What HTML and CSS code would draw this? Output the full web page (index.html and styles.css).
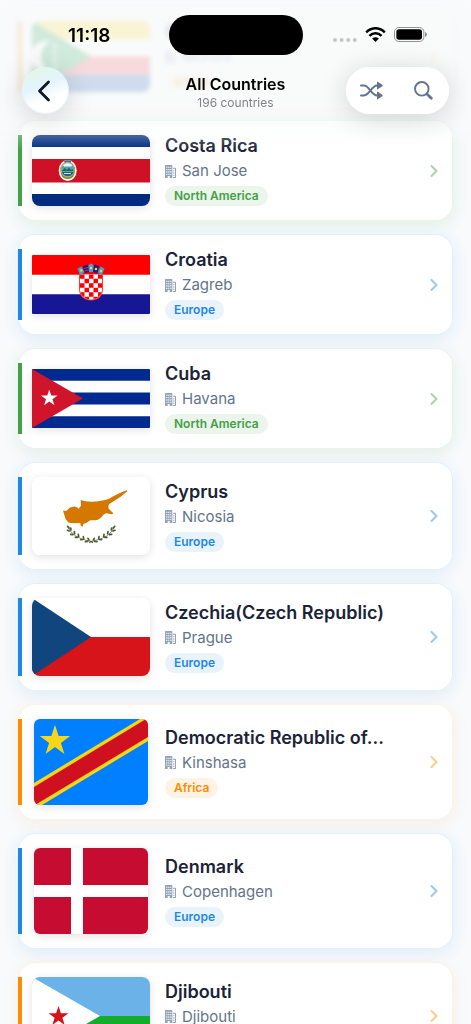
FILE: index.html
```html
<!DOCTYPE html>
<html lang="en">
<head>
  <meta charset="UTF-8">
  <meta name="viewport" content="width=device-width, initial-scale=1.0">
  <title>All Countries</title>
  <link rel="stylesheet" href="styles.css">
</head>
<body>

<!-- shared icons -->
<svg class="sprite" aria-hidden="true">
  <symbol id="building" viewBox="0 0 33 39">
    <path fill-rule="evenodd" d="M2 0h18q2 0 2 2v37h-8v-6H8v6H0V2q0-2 2-2zM4 5v4h3V5zm6 0v4h3V5zm6 0v4h3V5zM4 12v4h3v-4zm6 0v4h3v-4zm6 0v4h3v-4zM4 19v4h3v-4zm6 0v4h3v-4zm6 0v4h3v-4zM4 26v4h3v-4zm6 0v4h3v-4zm6 0v4h3v-4z"/>
    <path fill-rule="evenodd" d="M24 8h7q2 0 2 2v27q0 2-2 2h-7v-3h6V11h-6zM25 15h3v4h-3zm0 7h3v4h-3zm0 7h3v4h-3z"/>
  </symbol>
  <symbol id="chevron" viewBox="0 0 8 12">
    <path d="M1.5 1L6.500 6L1.5 11" fill="none" stroke="currentColor" stroke-width="2" stroke-linecap="round" stroke-linejoin="round"/>
  </symbol>
  <symbol id="star" viewBox="-10 -10 20 20">
    <path d="M0-10L2.3-3.1H9.5L3.7 1.2L5.9 8.1L0 3.8L-5.9 8.1L-3.7 1.2L-9.5-3.1H-2.3z"/>
  </symbol>
</svg>

<header class="header">
  <div class="status-bar">
    <span class="time">11:18</span>
    <span class="island"></span>
    <div class="status-icons">
      <svg class="signal" viewBox="0 0 24 4"><circle cx="2" cy="2" r="2"/><circle cx="8.6" cy="2" r="2"/><circle cx="15.2" cy="2" r="2"/><circle cx="21.8" cy="2" r="2"/></svg>
      <svg class="wifi" viewBox="0 0 62 44">
        <g fill="none" stroke="#000" stroke-width="7.5">
          <path d="M3.500 15.500Q16 3.500 31 3.500T58.500 15.500"/>
          <path d="M13 26Q21 18.500 31 18.500T49 26"/>
        </g>
        <path d="M21 34Q31 26 41 34L31 44z"/>
      </svg>
      <svg class="battery" viewBox="0 0 99 45">
        <rect x="1.500" y="1.500" width="88" height="42" rx="13" fill="none" stroke="#8f9193" stroke-width="3"/>
        <rect x="7" y="7" width="77" height="31" rx="8"/>
        <path d="M93 15q6 2 6 7.500t-6 7.500z" fill="#8f9193"/>
      </svg>
    </div>
  </div>
  <nav class="nav">
    <button class="back" aria-label="Back">
      <svg viewBox="0 0 14 22"><path d="M11.500 2L2.500 11L11.500 20" fill="none" stroke="#0b1a24" stroke-width="2.800" stroke-linecap="round" stroke-linejoin="round"/></svg>
    </button>
    <div class="nav-title">
      <h1>All Countries</h1>
      <p>196 countries</p>
    </div>
    <div class="actions">
      <button aria-label="Shuffle">
        <svg class="shuffle" viewBox="0 0 69 56">
          <g fill="none" stroke="currentColor" stroke-width="6" stroke-linecap="round">
            <path d="M3 13h9C28 13 34 43 52 43h2"/>
            <path d="M3 43h9C28 43 34 13 52 13h2"/>
          </g>
          <path d="M51 2.500v21q0 2 2 1l14-9.500q2-2 0-4L53 1.500q-2-1-2 1zM51 32.500v21q0 2 2 1l14-9.500q2-2 0-4L53 31.500q-2-1-2 1z"/>
        </svg>
      </button>
      <button aria-label="Search">
        <svg class="search" viewBox="0 0 56 56"><g fill="none" stroke="currentColor" stroke-linecap="round"><circle cx="23" cy="23" r="20" stroke-width="5.500"/><path d="M39 39L51 51" stroke-width="8"/></g></svg>
      </button>
    </div>
  </nav>
</header>

<main class="list">
  <a class="card africa" href="#comoros">
    <span class="bar"></span>
    <span class="flag-box">
      <svg class="flag" viewBox="0 0 118 71">
        <path fill="#fff" d="M0 0h118v71H0z"/><path fill="#ffd100" d="M0 0h118v18H0z"/><path fill="#ef3340" d="M0 35.500h118v18H0z"/><path fill="#003da5" d="M0 53.500h118V71H0z"/>
        <path fill="#009639" d="M0 0L59 35.500L0 71z"/>
        <path fill="#fff" d="M19 20a16 16 0 1 0 0 31a17 17 0 0 1 0-31z"/>
        <g fill="#fff"><circle cx="23" cy="25" r="2"/><circle cx="23" cy="32" r="2"/><circle cx="23" cy="39" r="2"/><circle cx="23" cy="46" r="2"/></g>
      </svg>
    </span>
    <span class="info">
      <span class="name">Comoros</span>
      <span class="city"><svg><use href="#building"/></svg>Moroni</span>
      <span class="badge">Africa</span>
    </span>
    <svg class="chevron"><use href="#chevron"/></svg>
  </a>

  <a class="card north-america" href="#costa-rica">
    <span class="bar"></span>
    <span class="flag-box">
      <svg class="flag" viewBox="0 0 118 71">
        <path fill="#002b7f" d="M0 0h118v71H0z"/><path fill="#fff" d="M0 12h118v47H0z"/><path fill="#ce1126" d="M0 24h118v23.500H0z"/>
        <ellipse cx="35.700" cy="35.500" rx="9" ry="10.500" fill="#fff"/>
        <path d="M28.500 32q-1 12 7.200 12t7.200-12" fill="#6b8f3c"/>
        <ellipse cx="35.700" cy="34.500" rx="7.200" ry="8" fill="#c6a44a"/>
        <ellipse cx="35.700" cy="34.500" rx="6" ry="6.800" fill="#4aa3c8"/>
        <path d="M31 30q4.700-4 9.400 0l-1 1.500h-7.400z" fill="#e8f4fa"/>
        <path d="M29.900 36l3-3l2 2l2-2.500l2 2.500l1.500-1l1 2z" fill="#286a3a"/>
        <path d="M30 37h11.500q-1 4-5.700 4t-5.800-4z" fill="#1c5f94"/>
        <path d="M32 38.500h7" stroke="#e0d9a0" stroke-width="1"/>
        <path d="M32.500 27q3.200-2 6.400 0" stroke="#1f6fa5" stroke-width="1.500" fill="none"/>
      </svg>
    </span>
    <span class="info">
      <span class="name">Costa Rica</span>
      <span class="city"><svg><use href="#building"/></svg>San Jose</span>
      <span class="badge">North America</span>
    </span>
    <svg class="chevron"><use href="#chevron"/></svg>
  </a>

  <a class="card europe" href="#croatia">
    <span class="bar"></span>
    <span class="flag-box">
      <svg class="flag square" viewBox="0 0 118 59">
        <path fill="#fff" d="M0 0h118v59H0z"/><path fill="#f00" d="M0 0h118v19.700H0z"/><path fill="#171796" d="M0 39.300h118V59H0z"/>
        <clipPath id="shield"><path d="M48 19.500h22V33q0 11-11 11.500Q48 44 48 33z"/></clipPath>
        <path d="M47 19h24v14q0 12-12 12.500Q47 45 47 33z" fill="#f33"/>
        <g clip-path="url(#shield)">
          <path fill="#fff" d="M47 19h24v27H47z"/>
          <path stroke="#f00" stroke-width="4.500" stroke-dasharray="4.500 4.500" d="M48 21.500h22M48 30.500h22M48 39.500h22"/>
          <path stroke="#f00" stroke-width="4.500" stroke-dasharray="4.500 4.500" d="M52.500 26h18M52.500 35h18M52.500 44h18"/>
        </g>
        <path fill="#2fa8dc" d="M45.500 13.500l4-2l3 6l-4.500 2.500z"/><path fill="#171796" d="M51 11l4.500-1.500l1.500 7.500l-4.500 1.200z"/>
        <path fill="#2fa8dc" d="M56.500 10l2.500-1.500l2.500 1.500l-.500 7h-4z"/><path fill="#171796" d="M62.500 9.500l4.500 1.500l-1.500 7.200l-4.500-1.200z"/>
        <path fill="#2fa8dc" d="M68.500 11.500l4 2l-2.500 6.500l-4.500-2.500z"/>
        <g fill="#ffd21f"><circle cx="49.300" cy="15.500" r="1.200"/><circle cx="59" cy="13" r="1.200"/><circle cx="64" cy="14" r="1.300"/><circle cx="69" cy="16" r="1.200"/></g>
        <path stroke="#e22" stroke-width="1.200" d="M52 13.500l4-1M52.500 16l4-1"/>
      </svg>
    </span>
    <span class="info">
      <span class="name">Croatia</span>
      <span class="city"><svg><use href="#building"/></svg>Zagreb</span>
      <span class="badge">Europe</span>
    </span>
    <svg class="chevron"><use href="#chevron"/></svg>
  </a>

  <a class="card north-america" href="#cuba">
    <span class="bar"></span>
    <span class="flag-box">
      <svg class="flag square" viewBox="0 0 118 59">
        <path fill="#002a8f" d="M0 0h118v59H0z"/><path fill="#fff" d="M0 11.800h118v11.800H0zM0 35.400h118v11.800H0z"/>
        <path fill="#cf142b" d="M0 0L51 29.500L0 59z"/>
        <use href="#star" x="8.500" y="20.500" width="17.500" height="17.500" fill="#fff"/>
      </svg>
    </span>
    <span class="info">
      <span class="name">Cuba</span>
      <span class="city"><svg><use href="#building"/></svg>Havana</span>
      <span class="badge">North America</span>
    </span>
    <svg class="chevron"><use href="#chevron"/></svg>
  </a>

  <a class="card europe" href="#cyprus">
    <span class="bar"></span>
    <span class="flag-box">
      <svg class="flag tall" viewBox="0 0 354 234">
        <path fill="#fff" d="M0 0h354v234H0z"/>
        <path fill="#d57800" d="M93 101L104 101L112 93Q121 87 132 89L140 95L147 86L146 69L160 73Q190 76 216 70Q231 67 241 59L265 47L284 40L286 43L266 59L246 72L232 81Q225 92 234 99L244 109L240 112L222 109L214 113Q205 127 191 130L175 130L164 137L154 141L152 149L146 146L145 138L127 139L110 137L101 127L98 117Z"/>
        <g fill="none" stroke="#4e5b31" stroke-width="2">
          <path d="M106 148Q122 184 176 193"/><path d="M249 148Q233 184 179 193"/>
        </g>
        <g fill="none" stroke="#4e5b31" stroke-width="5" stroke-linecap="round">
          <path d="M107 148l4 5M116 153l1 6M106 160l6 2M127 164l1 6M116 172l7 1M139 172l1 7M130 181l7 0M154 179l1 6M146 188l7-1M168 184l3 5M160 194l7-1"/>
          <path d="M248 148l-4 5M239 153l-1 6M249 160l-6 2M228 164l-1 6M239 172l-7 1M216 172l-1 7M225 181l-7 0M201 179l-1 6M209 188l-7-1M187 184l-3 5M195 194l-7-1"/>
        </g>
        <path fill="none" stroke="#4e5b31" stroke-width="4" d="M172 197l5-4l6 4"/>
      </svg>
    </span>
    <span class="info">
      <span class="name">Cyprus</span>
      <span class="city"><svg><use href="#building"/></svg>Nicosia</span>
      <span class="badge">Europe</span>
    </span>
    <svg class="chevron"><use href="#chevron"/></svg>
  </a>

  <a class="card europe" href="#czechia">
    <span class="bar"></span>
    <span class="flag-box">
      <svg class="flag tall" viewBox="0 0 118 78">
        <path fill="#fff" d="M0 0h118v39H0z"/><path fill="#d7141a" d="M0 39h118v39H0z"/><path fill="#11457e" d="M0 0L59 39L0 78z"/>
      </svg>
    </span>
    <span class="info">
      <span class="name">Czechia(Czech Republic)</span>
      <span class="city"><svg><use href="#building"/></svg>Prague</span>
      <span class="badge">Europe</span>
    </span>
    <svg class="chevron"><use href="#chevron"/></svg>
  </a>

  <a class="card africa" href="#dr-congo">
    <span class="bar"></span>
    <span class="flag-box">
      <svg class="flag narrow" viewBox="0 0 114 86">
        <path fill="#007fff" d="M0 0h114v86H0z"/>
        <path fill="#f7d618" d="M0 64L106 0H114V22L8 86H0z"/>
        <path fill="#ce1021" d="M0 68L112 0H114V18L1 86H0z"/>
        <use href="#star" x="5" y="5" width="32" height="34" fill="#f7d618"/>
      </svg>
    </span>
    <span class="info">
      <span class="name">Democratic Republic of...</span>
      <span class="city"><svg><use href="#building"/></svg>Kinshasa</span>
      <span class="badge">Africa</span>
    </span>
    <svg class="chevron"><use href="#chevron"/></svg>
  </a>

  <a class="card europe" href="#denmark">
    <span class="bar"></span>
    <span class="flag-box">
      <svg class="flag narrow" viewBox="0 0 114 86">
        <path fill="#c60c30" d="M0 0h114v86H0z"/><path fill="#fff" d="M37 0h12v86H37zM0 37h114v12H0z"/>
      </svg>
    </span>
    <span class="info">
      <span class="name">Denmark</span>
      <span class="city"><svg><use href="#building"/></svg>Copenhagen</span>
      <span class="badge">Europe</span>
    </span>
    <svg class="chevron"><use href="#chevron"/></svg>
  </a>

  <a class="card africa" href="#djibouti">
    <span class="bar"></span>
    <span class="flag-box">
      <svg class="flag tall" viewBox="0 0 118 78">
        <path fill="#6ab2e7" d="M0 0h118v39H0z"/><path fill="#12ad2b" d="M0 39h118v39H0z"/><path fill="#fff" d="M0 0L68 39L0 78z"/>
        <use href="#star" x="16" y="29" width="21" height="21" fill="#d7141a"/>
      </svg>
    </span>
    <span class="info">
      <span class="name">Djibouti</span>
      <span class="city"><svg><use href="#building"/></svg>Djibouti</span>
      <span class="badge">Africa</span>
    </span>
    <svg class="chevron"><use href="#chevron"/></svg>
  </a>
</main>

</body>
</html>
```
FILE: styles.css
```css
* {
  box-sizing: border-box;
}
html {
  scrollbar-width: none;
}
body {
  margin: 0;
  font-family: Inter, "Liberation Sans", sans-serif;
  background-color: #f8fafc;
}
button {
  border: none;
  padding: 0;
  background: none;
  cursor: pointer;
}
.sprite {
  display: none;
}

/* header */
.header {
  position: fixed;
  top: 0;
  left: 0;
  right: 0;
  z-index: 2;
}
.header::before {
  content: "";
  position: absolute;
  inset: 0 0 -36px;
  z-index: -1;
  background: linear-gradient(rgba(248, 250, 251, 0.84) 70%, rgba(248, 250, 251, 0));
}
.header::after {
  content: "";
  position: absolute;
  inset: 0 0 4px;
  z-index: -1;
  backdrop-filter: blur(2px);
}
.status-bar {
  display: grid;
  grid-template-columns: 1fr 134px 1fr;
  align-items: center;
  height: 67px;
}
.time {
  padding: 4px 0 0 10px;
  text-align: center;
  font-size: 19px;
  font-weight: 600;
}
.island {
  height: 40px;
  margin-top: 2px;
  border-radius: 20px;
  background: #000;
}
.status-icons {
  display: flex;
  justify-content: flex-end;
  align-items: center;
  gap: 8px;
  padding: 2px 44px 0 0;
}
.signal {
  width: 24px;
  height: 4px;
  margin-top: 10px;
  fill: #c3c5c7;
}
.wifi {
  width: 21px;
  height: 15px;
}
.battery {
  width: 33px;
  height: 15px;
}
.nav {
  display: grid;
  grid-template-columns: 1fr auto 1fr;
  align-items: center;
  padding: 0 22px;
}
.back,
.actions {
  display: flex;
  align-items: center;
  justify-content: center;
  height: 47px;
  border-radius: 24px;
  background: rgba(255, 255, 255, 0.9);
  box-shadow: 0 4px 28px rgba(0, 0, 0, 0.16);
}
.back {
  width: 47px;
  border: 1px solid #e3f3fa;
  background: linear-gradient(160deg, #e2f8e4 10%, #e3f4fd 40%, #fff 65%);
}
.back svg {
  width: 14px;
  height: 22px;
  margin-right: 4px;
}
.nav-title {
  padding-top: 4px;
  text-align: center;
}
.nav-title h1 {
  margin: 0;
  font-size: 16px;
  line-height: 20px;
  font-weight: 600;
}
.nav-title p {
  margin: 0;
  font-size: 12px;
  line-height: 18px;
  color: #808386;
}
.actions {
  justify-self: end;
  width: 103px;
  color: #64748b;
}
.actions button {
  flex: 1;
  height: 47px;
  color: inherit;
}
.actions svg {
  display: block;
  margin: auto;
  fill: currentColor;
}
.shuffle {
  width: 23px;
  height: 19px;
}
.search {
  width: 19px;
  height: 19px;
}

/* country list */
.list {
  display: flex;
  flex-direction: column;
  gap: 13px;
  padding: 6px 18px 24px;
}
.africa {
  --region: #ff8c00;
  --tint: #fff3e6;
  --line: #fdf1e4;
  --glow: rgba(255, 140, 0, 0.1);
}
.europe {
  --region: #1e88e5;
  --tint: #e8f3fc;
  --line: #e3f0fc;
  --glow: rgba(30, 136, 229, 0.12);
}
.north-america {
  --region: #43a047;
  --tint: #ecf5ec;
  --line: #e8f3e9;
  --glow: rgba(67, 160, 71, 0.12);
}
.card {
  display: flex;
  align-items: center;
  padding: 15px 15px 15px 0;
  border-radius: 17px;
  background: #fff;
  box-shadow: inset 0 0 0 1px var(--line), 0 4px 16px var(--glow);
  color: #1a2338;
  text-decoration: none;
}
.bar {
  align-self: stretch;
  width: 4px;
  background: var(--region);
}
.flag-box {
  display: flex;
  justify-content: center;
  width: 118px;
  margin: 0 15px 0 10px;
}
.flag {
  width: 118px;
  height: 71px;
  border-radius: 8px;
  box-shadow: 0 2px 8px rgba(0, 0, 0, 0.12);
}
.flag.square {
  height: 59px;
  border-radius: 1px;
}
.flag.tall {
  height: 78px;
}
.flag.narrow {
  width: 114px;
  height: 86px;
  border-radius: 6px;
}
.info {
  display: flex;
  flex: 1;
  flex-direction: column;
  align-items: flex-start;
  min-width: 0;
}
.name {
  font-size: 18px;
  line-height: 22px;
  font-weight: 600;
  white-space: nowrap;
}
.city {
  display: flex;
  align-items: center;
  gap: 6px;
  margin: 4px 0 5px;
  font-size: 15px;
  line-height: 20px;
  color: #64748b;
}
.city svg {
  width: 11px;
  height: 13px;
  fill: #94a3b8;
}
.badge {
  padding: 0 9px;
  border-radius: 10px;
  background: var(--tint);
  color: var(--region);
  font-size: 12px;
  line-height: 20px;
  font-weight: 600;
}
.chevron {
  width: 8px;
  height: 12px;
  color: var(--region);
  opacity: 0.45;
}
```
